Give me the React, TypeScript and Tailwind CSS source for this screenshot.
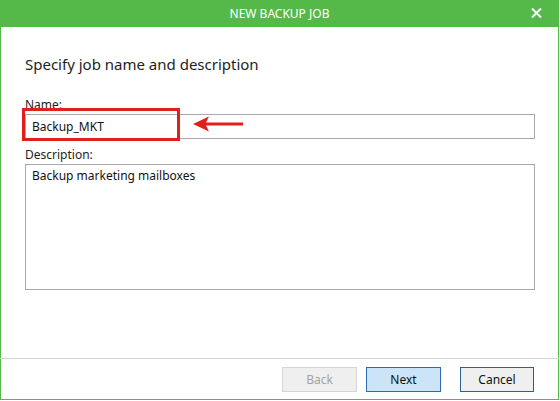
import React from 'react';

const font = { fontFamily: '"Noto Sans", "Open Sans", sans-serif' };

export default function App() {
  return (
    <div className="w-[560px] h-[401px] bg-white overflow-hidden" style={font}>
      <div className="w-[559px] h-[400px] flex flex-col border-x border-b border-[#54b948]">
        {/* title bar */}
        <div className="relative h-[27px] -mx-px bg-[#54b948] flex items-center justify-center text-white text-[12px]">
          NEW BACKUP JOB
          <svg className="absolute right-[17px] top-[8px]" width="11" height="10" viewBox="0 0 11 10">
            <path d="M1 0.5 L10 9.5 M10 0.5 L1 9.5" stroke="white" strokeWidth="2" />
          </svg>
        </div>

        <div className="relative flex-1 flex flex-col px-[24px]">
          <h1 className="mt-[27px] text-[15px] leading-[20px] text-[#1e1e1e]">
            Specify job name and description
          </h1>

          <label className="mt-[24px] text-[12px] leading-[14px] text-[#1e1e1e]">Name:</label>
          <div className="mt-[2px] w-[510px] h-[25px] border border-[#a9a9a9] flex items-center px-[6px] text-[12px] text-[#111]">
            Backup_MKT
          </div>

          <label className="mt-[9px] text-[12px] leading-[14px] text-[#1e1e1e]">Description:</label>
          <div className="mt-[2px] w-[510px] h-[126px] border border-[#a9a9a9] px-[6px] py-[2px] text-[12px] leading-[18px] text-[#111]">
            Backup marketing mailboxes
          </div>

          {/* annotation: red box + arrow */}
          <div className="absolute left-[21px] top-[81px] w-[158px] h-[33px] border-[3px] border-[#e0201c]" />
          <svg className="absolute left-[191px] top-[88px]" width="52" height="18" viewBox="0 0 52 18">
            <path d="M1 9 L17 1.5 L14 7.5 L51 7.5 L51 10.5 L14 10.5 L17 16.5 Z" fill="#e0201c" />
          </svg>
        </div>

        <div className="h-px bg-[#d4d4d4] -mx-px" />
        <div className="h-[40px] flex items-start justify-end pt-[8px] pr-[24px] text-[12px]">
          <button className="w-[75px] h-[25px] mr-[9px] border border-[#d5d5d5] bg-[#efefef] text-[#a3a3a3]">Back</button>
          <button className="w-[75px] h-[25px] mr-[19px] border border-[#2b6cb0] bg-[#cce4f7] text-[#111]">Next</button>
          <button className="w-[74px] h-[25px] border border-[#2f5f8c] bg-[#efefef] text-[#111]">Cancel</button>
        </div>
      </div>
    </div>
  );
}
